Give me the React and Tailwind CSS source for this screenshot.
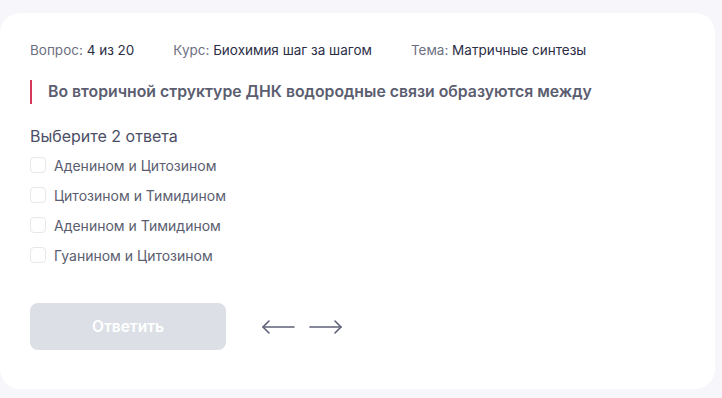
import React, { useState } from 'react';

const answers = [
  'Аденином и Цитозином',
  'Цитозином и Тимидином',
  'Аденином и Тимидином',
  'Гуанином и Цитозином',
];

const ArrowLeft = () => (
  <svg width="34" height="16" viewBox="0 0 34 16" fill="none" stroke="#5f6179" strokeWidth="1.6" strokeLinecap="round" strokeLinejoin="round">
    <path d="M2 8h31" />
    <path d="M8 2L2 8l6 6" />
  </svg>
);

const ArrowRight = () => (
  <svg width="34" height="16" viewBox="0 0 34 16" fill="none" stroke="#5f6179" strokeWidth="1.6" strokeLinecap="round" strokeLinejoin="round">
    <path d="M1 8h31" />
    <path d="M26 2l6 6-6 6" />
  </svg>
);

const App = () => {
  const [checked, setChecked] = useState([]);

  const toggle = (i) =>
    setChecked((c) => (c.includes(i) ? c.filter((x) => x !== i) : [...c, i]));

  return (
    <div className="min-h-screen w-[722px] h-[398px] bg-[#f6f6fb] pt-[13px] pr-[7px] font-['Inter','Noto_Sans',sans-serif]">
      <div className="bg-white rounded-[20px] h-[376px] px-[30px] pt-[29px]">
        {/* Meta */}
        <div className="flex items-center gap-[39px] text-[13.5px] leading-[16px] text-[#6d7083]">
          <span>
            Вопрос: <span className="text-[#2c2e46]">4 из 20</span>
          </span>
          <span>
            Курс: <span className="text-[#2c2e46]">Биохимия шаг за шагом</span>
          </span>
          <span>
            Тема: <span className="text-[#2c2e46]">Матричные синтезы</span>
          </span>
        </div>

        {/* Question */}
        <div className="mt-[22px] flex items-center h-[24px] border-l-2 border-[#d7375b] pl-4">
          <p className="text-[15.8px] font-semibold text-[#5b5d70]">
            Во вторичной структуре ДНК водородные связи образуются между
          </p>
        </div>

        {/* Answers */}
        <p className="mt-[23px] text-[16px] leading-[18px] text-[#4b4e65]">Выберите 2 ответа</p>
        <div className="mt-[5px] flex flex-col">
          {answers.map((a, i) => (
            <label key={a} className="flex items-center gap-2 h-[30px] cursor-pointer">
              <span
                onClick={() => toggle(i)}
                className={`w-4 h-4 rounded-[4px] border ${
                  checked.includes(i) ? 'bg-[#5f6179] border-[#5f6179]' : 'border-[#e6e7ec] bg-white'
                }`}
              />
              <span className="text-[14px] text-[#5b5d70]">{a}</span>
            </label>
          ))}
        </div>

        {/* Actions */}
        <div className="mt-[33px] flex items-center">
          <button className="w-[196px] h-[47px] rounded-[8px] bg-[#dce0e6] text-white text-[15.5px] font-semibold">
            Ответить
          </button>
          <div className="ml-[35px] flex items-center gap-[14px]">
            <ArrowLeft />
            <ArrowRight />
          </div>
        </div>
      </div>
    </div>
  );
};

export default App;
